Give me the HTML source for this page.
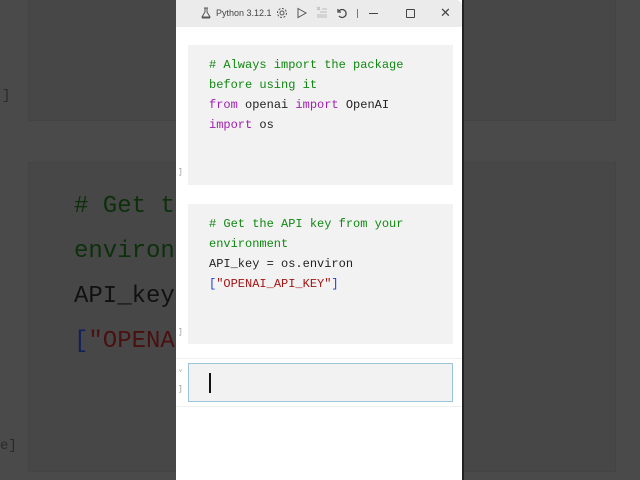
<!DOCTYPE html>
<html><head><meta charset="utf-8"><style>
body{margin:0;width:640px;height:480px;background:#4a4a4a;position:relative;overflow:hidden;font-family:"Liberation Mono",monospace}
.bg{position:absolute;background:#474747;border:1px solid #444}
.big{position:absolute;left:74px;top:184px;font-size:24px;line-height:45px;color:#111;white-space:pre}
.g{color:#0c300c}
.win{position:absolute;left:176px;top:0;width:286px;height:480px;background:#fff;border-right:2px solid #222}
.tb{position:absolute;left:0;top:0;width:286px;height:27px;background:#ebebeb;border-radius:0 6px 0 0;font-family:"Liberation Sans",sans-serif;font-size:9px;color:#444}
.cell{position:absolute;left:12px;width:265px;background:#f2f2f2;font-size:12px;line-height:20px;color:#222;white-space:pre}
.cell div{padding-left:21px}
.k{color:#a020b0}.c{color:#118811}.s{color:#a31515}.b{color:#2040d0}
.br{position:absolute;font-size:8px;color:#999}
</style></head><body>
<div class="bg" style="left:28px;top:-2px;width:586px;height:121px"></div>
<div class="bg" style="left:28px;top:162px;width:586px;height:308px"></div>
<div class="br" style="left:2px;top:88px;font-size:14px;color:#2a2a2a">]</div>
<div class="br" style="left:0px;top:438px;font-size:14px;color:#2a2a2a">e]</div>
<div class="big"><span class="g"># Get the API key from your</span>
<span class="g">environment</span>
API_key = os.environ
<span style="color:#12205a">[</span><span style="color:#4a1010">"OPENAI_API_KEY"</span><span style="color:#12205a">]</span></div>
<div class="win">
<div class="tb">
<svg style="position:absolute;left:24px;top:7px" width="12" height="12" viewBox="0 0 12 12" fill="none" stroke="#555" stroke-width="1"><path d="M4 1h4M5 1v4L2 10h8L7 5V1M2 11h8"/></svg>
<span style="position:absolute;left:40px;top:8px">Python 3.12.1</span>
<svg style="position:absolute;left:100px;top:7px" width="12" height="12" viewBox="0 0 12 12" fill="none" stroke="#555"><circle cx="6" cy="6" r="2"/><circle cx="6" cy="6" r="4.5" stroke-dasharray="2 1.5"/></svg>
<svg style="position:absolute;left:120px;top:7px" width="12" height="12" viewBox="0 0 12 12" fill="none" stroke="#555"><path d="M2 1.5L10 6 2 10.5Z"/></svg>
<svg style="position:absolute;left:140px;top:6px" width="12" height="12" viewBox="0 0 12 12" fill="none" stroke="#bbb"><path d="M1 1l3 3M4 1L1 4M6 3h5M4 6h7M1 9h10M1 11h10"/></svg>
<svg style="position:absolute;left:160px;top:7px" width="12" height="12" viewBox="0 0 12 12" fill="none" stroke="#444" stroke-width="1.3"><path d="M3 4a4 4 0 1 1 0 5M2 2v3h3"/></svg>
<div style="position:absolute;left:181px;top:9px;width:1px;height:9px;background:#777"></div>
<div style="position:absolute;left:193px;top:13px;width:9px;height:1px;background:#444"></div>
<div style="position:absolute;left:230px;top:9px;width:7px;height:7px;border:1px solid #444;border-radius:1px"></div>
<span style="position:absolute;left:264px;top:5px;font-size:13px;color:#444">✕</span>
</div>
<div class="br" style="left:2px;top:168px">]</div>
<div class="br" style="left:2px;top:328px">]</div>
<div class="br" style="left:2px;top:364px">⌄</div>
<div class="br" style="left:2px;top:385px">]</div>
<div class="cell" style="top:45px;height:140px"><div style="padding-top:10px"><span class="c"># Always import the package
before using it</span>
<span class="k">from</span> openai <span class="k">import</span> OpenAI
<span class="k">import</span> os</div></div>
<div class="cell" style="top:204px;height:140px"><div style="padding-top:10px"><span class="c"># Get the API key from your
environment</span>
API_key = os.environ
<span class="b">[</span><span class="s">"OPENAI_API_KEY"</span><span class="b">]</span></div></div>
<div style="position:absolute;left:0;top:358px;width:286px;height:1px;background:#f0f0f0"></div>
<div class="cell" style="top:363px;height:37px;border:1px solid #9cc3d6;width:263px"><div style="position:absolute;left:20px;top:9px;width:2px;height:20px;background:#111;padding:0"></div></div>
<div style="position:absolute;left:0;top:406px;width:286px;height:1px;background:#f0f0f0"></div>
</div>
</body></html>
